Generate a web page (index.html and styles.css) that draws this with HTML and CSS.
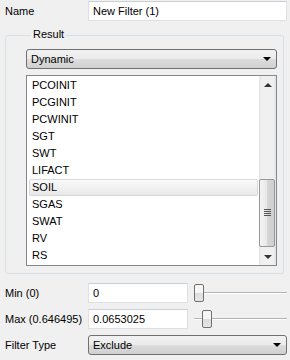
FILE: index.html
```html
<!DOCTYPE html>
<html lang="en">
<head>
  <meta charset="UTF-8">
  <title>Filter</title>
  <link rel="stylesheet" href="styles.css">
</head>
<body>
  <div class="panel">
    <div class="row name-row">
      <label class="lbl">Name</label>
      <input class="field wide" type="text" value="New Filter (1)">
    </div>

    <fieldset class="group">
      <legend>Result</legend>
      <div class="combo"><span>Dynamic</span><span class="arrow"></span></div>
      <div class="list">
        <ul class="items">
          <li>PCOINIT</li>
          <li>PCGINIT</li>
          <li>PCWINIT</li>
          <li>SGT</li>
          <li>SWT</li>
          <li>LIFACT</li>
          <li class="selected">SOIL</li>
          <li>SGAS</li>
          <li>SWAT</li>
          <li>RV</li>
          <li>RS</li>
        </ul>
        <div class="scrollbar">
          <div class="sb-btn"><span class="up"></span></div>
          <div class="sb-track">
            <div class="sb-thumb"><span class="grip"></span></div>
          </div>
          <div class="sb-btn"><span class="down"></span></div>
        </div>
      </div>
    </fieldset>

    <div class="row min-row">
      <label class="lbl">Min (0)</label>
      <input class="field short" type="text" value="0">
      <div class="slider"><span class="handle" style="margin-left: 0px"></span></div>
    </div>
    <div class="row">
      <label class="lbl">Max (0.646495)</label>
      <input class="field short" type="text" value="0.0653025">
      <div class="slider"><span class="handle" style="margin-left: 8px"></span></div>
    </div>
    <div class="row">
      <label class="lbl">Filter Type</label>
      <div class="combo wide"><span>Exclude</span><span class="arrow"></span></div>
    </div>
  </div>
</body>
</html>
```

FILE: styles.css
```css
body {
  margin: 0;
  background: #f0f0f0;
  font-family: "Liberation Sans", Arial, sans-serif;
  font-size: 11px;
  color: #000;
}
.panel {
  width: 290px;
  height: 360px;
  padding-top: 1px;
  box-sizing: border-box;
}
.row {
  display: flex;
  align-items: center;
  height: 20px;
  margin-top: 6px;
}
.name-row {
  margin-top: 0;
}
.min-row {
  margin-top: 9px;
}
.lbl {
  width: 83px;
  padding-left: 5px;
  white-space: nowrap;
}
.field {
  height: 20px;
  box-sizing: border-box;
  border: 1px solid #dde1e6;
  border-top-color: #c9ced4;
  background: #fff;
  font-family: inherit;
  font-size: 11px;
  padding: 0 4px;
  margin: 0;
  outline: none;
}
.field.wide {
  width: 199px;
}
.field.short {
  width: 100px;
}
.slider {
  margin-left: 6px;
  width: 93px;
  height: 19px;
  display: flex;
  align-items: center;
  background: linear-gradient(#f0f0f0 8px, #b4b4b4 8px, #b4b4b4 9px, #fff 9px, #fff 10px, #f0f0f0 10px);
}
.handle {
  display: block;
  width: 10px;
  height: 18px;
  box-sizing: border-box;
  border: 1px solid #707070;
  border-radius: 2px;
  background: linear-gradient(#f6f6f6, #f6f6f6 50%, #dcdcdc 50%, #e6e6e6);
}
.group {
  margin: 5px 6px 0 5px;
  padding: 4px 6px 7px 20px;
  border: 1px solid #d5dfe5;
  border-radius: 3px;
}
.group legend {
  padding: 2px 2px 4px;
  margin-left: 5px;
  line-height: 13px;
}
.combo {
  display: flex;
  align-items: center;
  justify-content: space-between;
  height: 20px;
  box-sizing: border-box;
  border: 1px solid #707070;
  border-radius: 3px;
  padding: 0 5px 0 4px;
  background: linear-gradient(#f2f2f2, #ebebeb 50%, #dddddd 50%, #cfcfcf);
}
.combo.wide {
  width: 199px;
}
.arrow {
  width: 0;
  height: 0;
  border-left: 4px solid transparent;
  border-right: 4px solid transparent;
  border-top: 4px solid #000;
}
.list {
  margin-top: 6px;
  height: 191px;
  box-sizing: border-box;
  border: 1px solid #828790;
  background: #fff;
  display: flex;
}
.items {
  list-style: none;
  margin: 0;
  padding: 1px 1px 0 2px;
  flex: 1;
  overflow: hidden;
}
.items li {
  height: 17px;
  line-height: 17px;
  padding-left: 3px;
  box-sizing: border-box;
}
.items li.selected {
  border: 1px solid #d9d9d9;
  border-radius: 2px;
  padding-left: 2px;
  line-height: 15px;
  background: linear-gradient(#fafafa, #e8e8e8);
}
.scrollbar {
  width: 17px;
  display: flex;
  flex-direction: column;
  background: linear-gradient(90deg, #e4e4e4, #f0f0f0 3px, #f0f0f0 14px, #e4e4e4);
}
.sb-btn {
  height: 17px;
  display: flex;
  align-items: center;
  justify-content: center;
}
.up {
  border-left: 4px solid transparent;
  border-right: 4px solid transparent;
  border-bottom: 4px solid #333;
}
.down {
  border-left: 4px solid transparent;
  border-right: 4px solid transparent;
  border-top: 4px solid #333;
}
.sb-track {
  flex: 1;
  display: flex;
  flex-direction: column;
  justify-content: flex-end;
  padding-bottom: 1px;
}
.sb-thumb {
  height: 68px;
  margin: 0 1px 0 0;
  box-sizing: border-box;
  border: 1px solid #979797;
  border-radius: 2px;
  background: linear-gradient(90deg, #f4f4f4, #e8e8e8 50%, #d6d6d6 50%, #cfcfcf);
  display: flex;
  align-items: center;
  justify-content: center;
}
.grip {
  width: 7px;
  height: 8px;
  background: repeating-linear-gradient(#555 0, #555 1px, transparent 1px, transparent 2px);
}
```
